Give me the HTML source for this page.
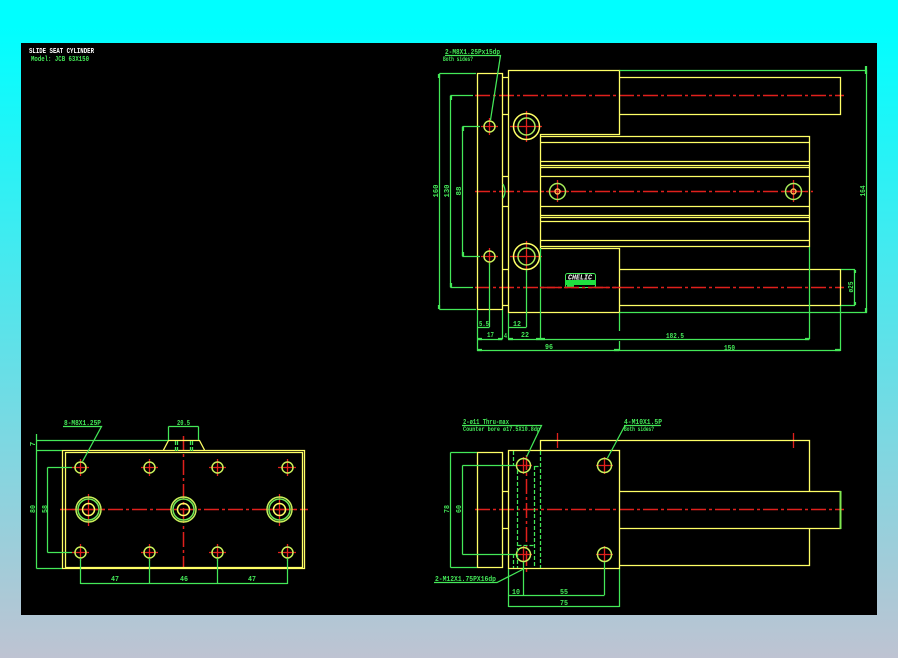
<!DOCTYPE html>
<html lang="en">
<head>
<meta charset="utf-8">
<title>Slide Seat Cylinder</title>
<style>
html,body{margin:0;padding:0;width:898px;height:658px;overflow:hidden}
body{background:linear-gradient(180deg,#00ffff 0%,#00ffff 4%,#bec3d2 100%)}
svg{position:absolute;left:0;top:0;display:block}
.y{fill:none;stroke:#ffff66;stroke-width:1.3}
.g{fill:none;stroke:#44e858;stroke-width:1.25}
.gt{fill:none;stroke:#44e858;stroke-width:2.2}
.r{fill:none;stroke:#e0201c;stroke-width:1.3}
.cl{stroke-width:1.5;stroke-dasharray:15 3 3 3}
.d{stroke-dasharray:4 2}
circle{stroke-width:1.5}
text{font-family:"Liberation Mono",monospace;fill:#44e858;font-size:7.500px;font-weight:bold}
</style>
</head>
<body>
<svg width="898" height="658" viewBox="0 0 898 658" xmlns="http://www.w3.org/2000/svg">
<rect x="21" y="43" width="856" height="572" fill="#000"/>

<!-- Top view: centre lines -->
<path class="r cl" d="M475 95.500H844M475 191.500H813M475 287.500H844"/>
<path class="r" d="M489.500 118V135M481 126.500H498M489.500 248V265M481 256.500H498M526.500 111V142M510 126.500H542M526.500 241V272M510 256.500H542M557.500 180V202M546 191.500H569M793.500 180V202M782 191.500H805"/>

<!-- Top view: outlines -->
<path class="y" d="M477.500 73.500H502.500V309.500H477.500ZM502.500 77.500H508.500M502.500 114.500H508.500M502.500 176.500H508.500M502.500 206.500H508.500M502.500 269.500H508.500M502.500 305.500H508.500"/>
<path class="y" d="M508.500 70.500H619.500V134.500H540.500V248.500H619.500V312.500H508.500ZM619.500 77.500H840.500V114.500H619.500M619.500 269.500H840.500V305.500H619.500"/>
<path class="y" d="M540.500 136.500H809.500V246.500H540.500M540.500 142.500H809.500M540.500 161.500H809.500M540.500 165.500H809.500M540.500 167.500H809.500M540.500 176.500H809.500M540.500 206.500H809.500M540.500 215.500H809.500M540.500 217.500H809.500M540.500 221.500H809.500M540.500 240.500H809.500"/>
<path class="g" d="M503 184Q507 191.500 503 198"/>

<!-- Top view: holes -->
<g fill="none">
<circle cx="489.500" cy="126.500" r="5.500" stroke="#c8f05a"/>
<circle cx="489.500" cy="256.500" r="5.500" stroke="#c8f05a"/>
<circle cx="526.500" cy="126.500" r="13" stroke="#ffff66"/>
<circle cx="526.500" cy="126.500" r="8.500" stroke="#a8ec5a"/>
<circle cx="526.500" cy="256.500" r="13" stroke="#ffff66"/>
<circle cx="526.500" cy="256.500" r="8.500" stroke="#a8ec5a"/>
<circle cx="557.500" cy="191.500" r="8" stroke="#a8ec5a"/>
<circle cx="557.500" cy="191.500" r="2.500" stroke="#f8b850"/>
<circle cx="793.500" cy="191.500" r="8" stroke="#a8ec5a"/>
<circle cx="793.500" cy="191.500" r="2.500" stroke="#f8b850"/>
</g>

<!-- Top view: dimensions -->
<path class="g" d="M439.500 73.500V309.500M439.500 73.500H476M439.500 309.500H476M450.500 95.500V287.500M450.500 95.500H473M450.500 287.500H473M462.500 126.500V256.500M462.500 126.500H480M462.500 256.500H480"/>
<path class="g" d="M445 55.500H500.500L490.500 120"/>
<path class="g" d="M619.500 70.500H866.500V312.500H619.500M841 269.500H854.500V305.500H841"/>
<path class="g" d="M477.500 310V351M502.500 310V339M508.500 313V339M540.500 248V339M489.500 263V327M526.500 270V327M477.500 327.500H489.500M508.500 327.500H526.500M477.500 339.500H502.500M508.500 339.500H809.500M477.500 350.500H840.500M619.500 313V331M619.500 341V351M809.500 247V339M840.500 306V351"/>
<path class="gt" d="M439 74V78M439 305V309M451 96V100M451 283V287M463 127V131M463 252V256M866 66V74M866 308V312M855 270V273M855 302V305M477 350H482M614 350H619M835 350H840M805 339H809M477 339H482M498 339H502M508 339H513M536 339H545"/>

<!-- Top view: labels -->
<text x="445" y="54" textLength="55" lengthAdjust="spacingAndGlyphs">2-M8X1.25Px15dp</text>
<text x="443" y="61" textLength="30" lengthAdjust="spacingAndGlyphs" style="font-size:6px">Both sides?</text>
<text transform="translate(438 191) rotate(-90)" text-anchor="middle" textLength="13" lengthAdjust="spacingAndGlyphs">160</text>
<text transform="translate(449 191) rotate(-90)" text-anchor="middle" textLength="13" lengthAdjust="spacingAndGlyphs">130</text>
<text transform="translate(461 191) rotate(-90)" text-anchor="middle" textLength="9" lengthAdjust="spacingAndGlyphs">88</text>
<text transform="translate(865 191) rotate(-90)" text-anchor="middle" textLength="11" lengthAdjust="spacingAndGlyphs">164</text>
<text transform="translate(853 287) rotate(-90)" text-anchor="middle" textLength="11" lengthAdjust="spacingAndGlyphs">ø25</text>
<text x="479" y="326" textLength="10" lengthAdjust="spacingAndGlyphs">5.5</text>
<text x="513" y="326" textLength="8" lengthAdjust="spacingAndGlyphs">12</text>
<text x="487" y="337" textLength="7" lengthAdjust="spacingAndGlyphs">17</text>
<text x="504" y="338" textLength="3" lengthAdjust="spacingAndGlyphs">4</text>
<text x="521" y="337" textLength="8" lengthAdjust="spacingAndGlyphs">22</text>
<text x="545" y="349" textLength="8" lengthAdjust="spacingAndGlyphs">96</text>
<text x="666" y="338" textLength="18" lengthAdjust="spacingAndGlyphs">182.5</text>
<text x="724" y="350" textLength="11" lengthAdjust="spacingAndGlyphs">150</text>

<!-- CHELIC logo -->
<rect x="565.500" y="273.500" width="30" height="14" rx="2" fill="#000" stroke="#44e858"/>
<rect x="565" y="280" width="31" height="5" fill="#20e040"/>
<rect x="567" y="285" width="7" height="2" fill="#20e040"/>
<text x="568" y="279.500" textLength="24" lengthAdjust="spacingAndGlyphs" style="fill:#fff;font-style:italic;font-size:7px">CHELIC</text>
<path class="r cl" d="M540 287.500H620"/>

<!-- Bottom-left view -->
<path class="r cl" d="M60 509.500H308M183.500 436V568"/>
<path class="r" d="M80.500 459V476M72 467.500H89M149.500 459V476M141 467.500H158M217.500 459V476M209 467.500H226M287.500 459V476M278 467.500H296M80.500 544V561M72 552.500H89M149.500 544V561M141 552.500H158M217.500 544V561M209 552.500H226M287.500 544V561M278 552.500H296M88.500 494V526M72 509.500H105M279.500 494V526M263 509.500H296"/>
<path class="y" d="M62.500 450.500H304.500V568.500H62.500ZM65.500 452.500H302.500V567.500H65.500ZM163.500 450L168.500 440.500H199.500L204.500 450"/>
<g fill="none">
<circle cx="80.500" cy="467.500" r="5.500" stroke="#c8f05a"/><circle cx="149.500" cy="467.500" r="5.500" stroke="#c8f05a"/><circle cx="217.500" cy="467.500" r="5.500" stroke="#c8f05a"/><circle cx="287.500" cy="467.500" r="5.500" stroke="#c8f05a"/>
<circle cx="80.500" cy="552.500" r="5.500" stroke="#c8f05a"/><circle cx="149.500" cy="552.500" r="5.500" stroke="#c8f05a"/><circle cx="217.500" cy="552.500" r="5.500" stroke="#c8f05a"/><circle cx="287.500" cy="552.500" r="5.500" stroke="#c8f05a"/>
<circle cx="88.500" cy="509.500" r="12.500" stroke="#c8f05a"/><circle cx="88.500" cy="509.500" r="10.500" stroke="#6fe855"/><circle cx="88.500" cy="509.500" r="6" stroke="#ffff66"/>
<circle cx="183.500" cy="509.500" r="12.500" stroke="#c8f05a"/><circle cx="183.500" cy="509.500" r="10.500" stroke="#6fe855"/><circle cx="183.500" cy="509.500" r="6" stroke="#ffff66"/>
<circle cx="279.500" cy="509.500" r="12.500" stroke="#c8f05a"/><circle cx="279.500" cy="509.500" r="10.500" stroke="#6fe855"/><circle cx="279.500" cy="509.500" r="6" stroke="#ffff66"/>
</g>
<path class="g" d="M36.500 434V568.500M36.500 440.500H168M36.500 450.500H62M36.500 568.500H62M47.500 467.500V552.500M47.500 467.500H72M47.500 552.500H72M168.500 426.500H198.500M168.500 426.500V440M198.500 426.500V440M63 426.500H101.500L82.500 461.500"/>
<path class="g d" d="M175.500 441V453M177.500 441V453M190.500 441V453M192.500 441V453"/>
<path class="g" d="M80.500 558V584M149.500 558V584M217.500 558V584M287.500 558V584M80.500 583.500H287.500"/>
<text x="64" y="425" textLength="37" lengthAdjust="spacingAndGlyphs">8-M8X1.25P</text>
<text x="177" y="425" textLength="13" lengthAdjust="spacingAndGlyphs">20.5</text>
<text transform="translate(35 444) rotate(-90)" text-anchor="middle">7</text>
<text transform="translate(35 509) rotate(-90)" text-anchor="middle" textLength="8" lengthAdjust="spacingAndGlyphs">80</text>
<text transform="translate(47 509) rotate(-90)" text-anchor="middle" textLength="8" lengthAdjust="spacingAndGlyphs">58</text>
<text x="111" y="581" textLength="8" lengthAdjust="spacingAndGlyphs">47</text>
<text x="180" y="581" textLength="8" lengthAdjust="spacingAndGlyphs">46</text>
<text x="248" y="581" textLength="8" lengthAdjust="spacingAndGlyphs">47</text>

<!-- Bottom-right view -->
<path class="r cl" d="M475 509.500H844M526.500 455V572"/>
<path class="r" d="M557.500 433V448M793.500 433V448M515 465.500H532M523.500 457V474M515 554.500H532M523.500 546V563M596 465.500H613M604.500 457V474M596 554.500H613M604.500 546V563"/>
<path class="y" d="M477.500 452.500H502.500V567.500H477.500ZM502.500 491.500H508.500M502.500 528.500H508.500M508.500 450.500H619.500V568.500H508.500ZM540.500 450V440.500H809.500V491.500M619.500 491.500H840.500V528.500H619.500M809.500 528.500V565.500H619.500"/>
<path d="M840.500 491V529" stroke="#80e850" stroke-width="2" fill="none"/>
<g fill="none">
<circle cx="523.500" cy="465.500" r="7" stroke="#c8f05a"/><circle cx="523.500" cy="554.500" r="7" stroke="#c8f05a"/>
<circle cx="604.500" cy="465.500" r="7" stroke="#c8f05a"/><circle cx="604.500" cy="554.500" r="7" stroke="#c8f05a"/>
</g>
<path class="g d" d="M513.500 451V466M517.500 470V568M534.500 466V568M540.500 451V568M534.500 466.500H541M517.500 545.500H534M513.500 554V568"/>
<path class="g" d="M450.500 452.500V567.500M450.500 452.500H477M450.500 567.500H477M462.500 465.500V554.500M462.500 465.500H516M462.500 554.500H516"/>
<path class="g" d="M462 425.500H541.500L526.500 457M624 425.500H661M625 425.500L607.500 458M434 582.500H497L523.500 569"/>
<path class="g" d="M508.500 569V607M523.500 562V595M604.500 562V595M619.500 569V607M508.500 595.500H604.500M508.500 606.500H619.500"/>
<text x="463" y="424" textLength="46" lengthAdjust="spacingAndGlyphs">2-ø11 Thru-max</text>
<text x="463" y="431" textLength="77" lengthAdjust="spacingAndGlyphs" style="font-size:6px">Counter bore ø17.5X10.8dp</text>
<text x="624" y="424" textLength="38" lengthAdjust="spacingAndGlyphs">4-M10X1.5P</text>
<text x="624" y="431" textLength="30" lengthAdjust="spacingAndGlyphs" style="font-size:6px">Both sides?</text>
<text x="435" y="581" textLength="61" lengthAdjust="spacingAndGlyphs">2-M12X1.75PX16dp</text>
<text transform="translate(449 509) rotate(-90)" text-anchor="middle" textLength="8" lengthAdjust="spacingAndGlyphs">78</text>
<text transform="translate(461 509) rotate(-90)" text-anchor="middle" textLength="8" lengthAdjust="spacingAndGlyphs">60</text>
<text x="512" y="594" textLength="8" lengthAdjust="spacingAndGlyphs">10</text>
<text x="560" y="594" textLength="8" lengthAdjust="spacingAndGlyphs">55</text>
<text x="560" y="605" textLength="8" lengthAdjust="spacingAndGlyphs">75</text>

<!-- Title -->
<text x="29" y="53" textLength="65" lengthAdjust="spacingAndGlyphs" style="fill:#fff;font-size:7px">SLIDE SEAT CYLINDER</text>
<text x="31" y="61" textLength="58" lengthAdjust="spacingAndGlyphs" style="font-size:7px">Model: JCB 63X150</text>
</svg>
</body>
</html>
